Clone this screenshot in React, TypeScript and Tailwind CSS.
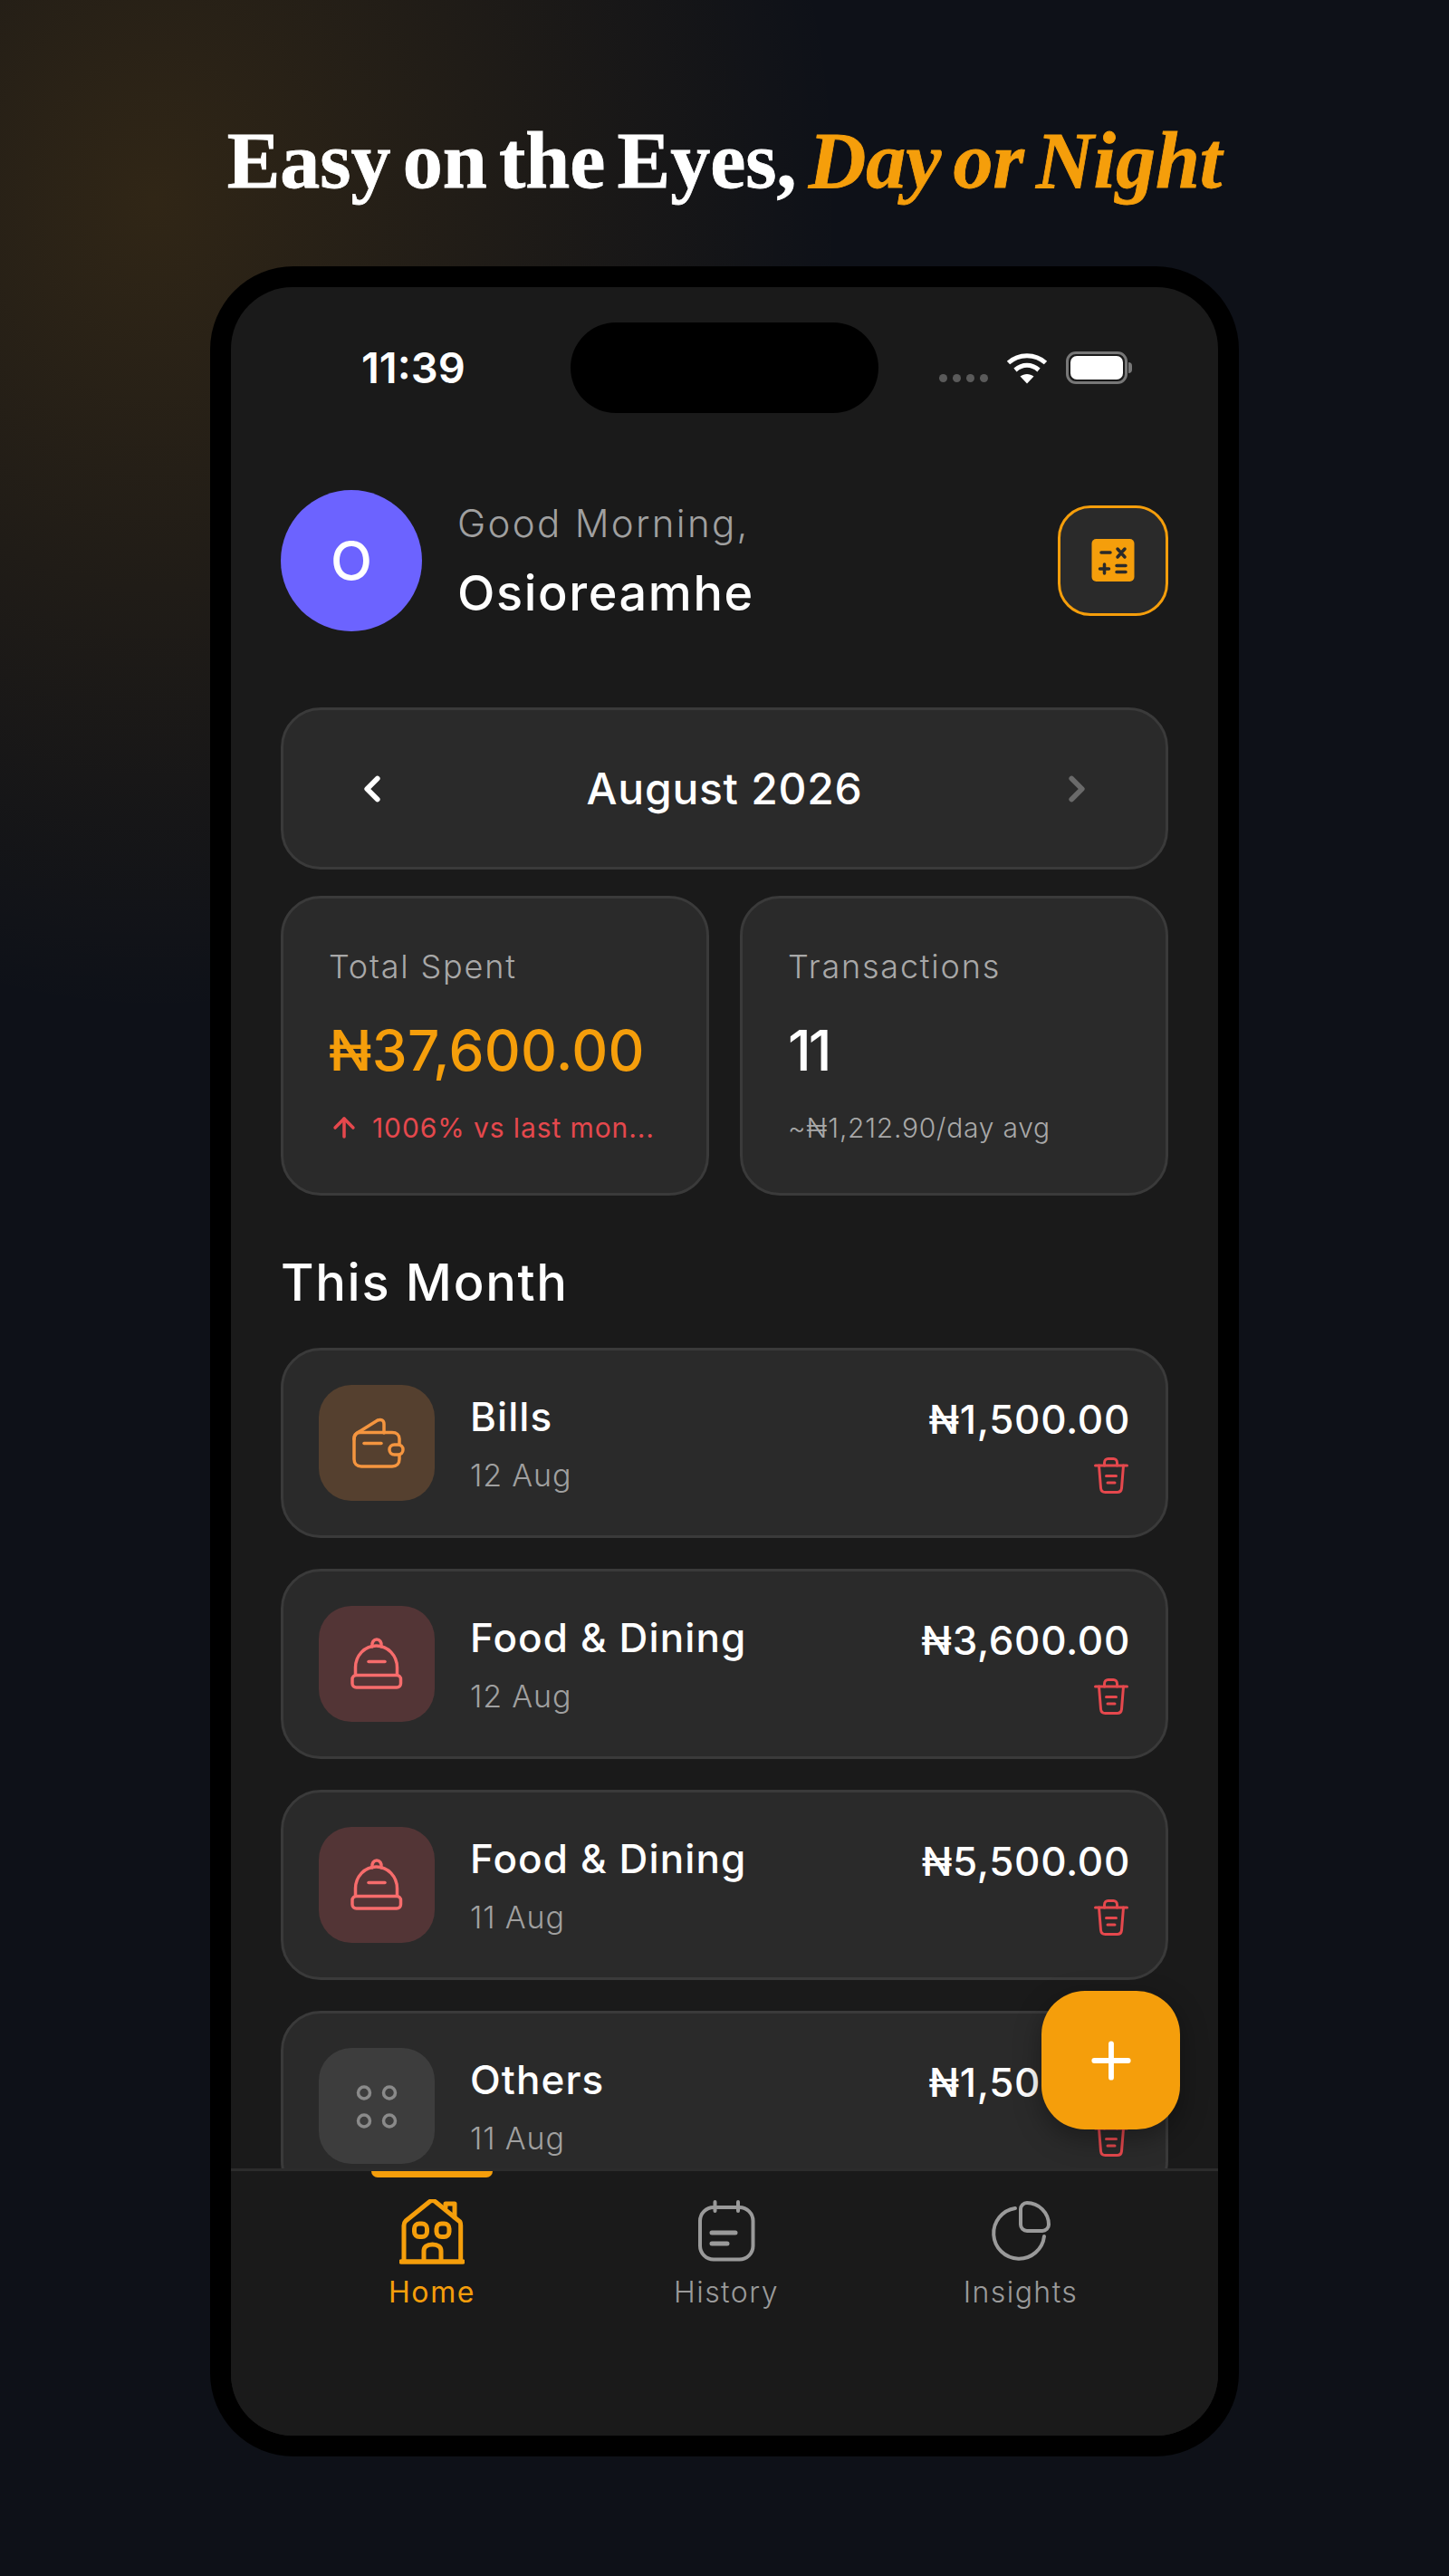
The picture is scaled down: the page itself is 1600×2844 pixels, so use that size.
import { ArrowUp, ChevronLeft, ChevronRight, Plus } from "lucide-react";

const rows = [
  { name: "Bills", date: "12 Aug", amount: "₦1,500.00", kind: "bills" },
  { name: "Food & Dining", date: "12 Aug", amount: "₦3,600.00", kind: "food" },
  { name: "Food & Dining", date: "11 Aug", amount: "₦5,500.00", kind: "food" },
  { name: "Others", date: "11 Aug", amount: "₦1,500.00", kind: "others" },
];

function WalletIcon() {
  return (
    <svg width="64" height="64" viewBox="0 0 64 64" fill="none" stroke="#f5953f" strokeWidth="3.500" strokeLinecap="round" strokeLinejoin="round">
      <path d="M7 28c0-4 2-7 6-8.500L33 7c4-1.500 7 0 7 4v10" />
      <path d="M7 27c0-4 3-6.500 7-6.500h35c5 0 8 3 8 7V50c0 5-3 8-8 8H15c-5 0-8-3-8-8Z" />
      <path d="M18 32.500h19" />
      <rect x="46" y="34" width="15" height="11" rx="5.500" fill="#55402f" />
    </svg>
  );
}

function FoodIcon() {
  return (
    <svg width="64" height="64" viewBox="0 0 64 64" fill="none" stroke="#f76c6c" strokeWidth="3.500" strokeLinecap="round" strokeLinejoin="round">
      <path d="M8.500 44V36c0-13 10-24 23-24s23 11 23 24v8" />
      <path d="M27 13c-1-5 2-8 5-8s6 3 5 8" />
      <rect x="5" y="44.500" width="53.500" height="13.500" rx="4.500" />
      <path d="M23 29.500h18" />
    </svg>
  );
}

function OthersIcon() {
  return (
    <svg width="64" height="64" viewBox="0 0 64 64" fill="none" stroke="#8a8a8a" strokeWidth="3.500">
      <circle cx="18" cy="17.500" r="6.500" />
      <circle cx="46" cy="17.500" r="6.500" />
      <circle cx="18" cy="48.500" r="6.500" />
      <circle cx="46" cy="48.500" r="6.500" />
    </svg>
  );
}

function TrashIcon() {
  return (
    <svg width="40" height="40" viewBox="0 0 40 40" fill="none" stroke="#e5484d" strokeWidth="3" strokeLinecap="round" strokeLinejoin="round">
      <path d="M2.500 9h35" />
      <path d="M12.500 9V6c0-3 2-4.500 4-4.500h6c2 0 4 1.500 4 4.500v3" />
      <path d="M6.500 9 8.500 34c.3 3 2 4.500 5 4.500h13c3 0 4.700-1.500 5-4.500l2-25" />
      <path d="M14.500 20.500h11M16 28h8" />
    </svg>
  );
}

function CalcIcon() {
  return (
    <svg width="48" height="48" viewBox="0 0 48 48">
      <rect x="0.500" width="47" height="47" rx="5" fill="#f59e0b" />
      <g stroke="#2a2a2a" strokeWidth="3.500" strokeLinecap="round">
        <path d="M11 15h10M29 11l8 9M37 11l-8 9M14.500 28v10M9.500 33h10M28 29.500h10M28 36.500h10" />
      </g>
    </svg>
  );
}

function HomeIcon() {
  return (
    <svg width="72" height="72" viewBox="0 0 72 72" fill="none" stroke="#f59e0b" strokeWidth="5" strokeLinecap="round" strokeLinejoin="round">
      <path d="M5 68V29c0-2 .5-3.500 2-5L33 3c2-1.800 5-1.800 7 0l27 22c.5 1 .7 2.500.7 4v39" />
      <path d="M51 9V5h10v15" />
      <rect x="16.500" y="27" width="14" height="14.500" rx="5.500" />
      <rect x="41" y="27" width="14" height="14.500" rx="5.500" />
      <path d="M27 68V57c0-4 3-7 9.500-7S46 53 46 57v11" />
      <path d="M2 69h68" strokeWidth="5.500" />
    </svg>
  );
}

function HistoryIcon() {
  return (
    <svg width="72" height="72" viewBox="0 0 72 72" fill="none" stroke="#9a9a9a" strokeWidth="4" strokeLinecap="round" strokeLinejoin="round">
      <rect x="7" y="9" width="58.500" height="57.500" rx="15" />
      <path d="M23.500 3v10M49 3v10" />
      <path d="M20 37h26M20 49h17" strokeWidth="5" />
    </svg>
  );
}

function InsightsIcon() {
  return (
    <svg width="72" height="72" viewBox="0 0 72 72" fill="none" stroke="#9a9a9a" strokeWidth="4" strokeLinecap="round" strokeLinejoin="round">
      <path d="M30 10A28 28 0 1 0 62 41" />
      <path d="M36 11a7 7 0 0 1 7-7c13 0 24 11 24 24a7 7 0 0 1-7 7H43a7 7 0 0 1-7-7Z" />
    </svg>
  );
}

function WifiIcon() {
  return (
    <svg width="46" height="36" viewBox="0 0 46 36" fill="none" stroke="#ffffff" strokeWidth="5">
      <path d="M2.500 12.500C14 2 32 2 43.500 12.500" />
      <path d="M10 20.500c8-7 18-7 26 0" />
      <path d="M23 35.500 15.500 27.500c4.500-3.500 10.500-3.500 15 0Z" fill="#ffffff" stroke="none" />
    </svg>
  );
}

function RowIcon({ kind }: { kind: string }) {
  if (kind === "bills") {
    return (
      <div className="flex h-[128px] w-[128px] shrink-0 items-center justify-center rounded-[36px] bg-[#55402f]">
        <WalletIcon />
      </div>
    );
  }
  if (kind === "food") {
    return (
      <div className="flex h-[128px] w-[128px] shrink-0 items-center justify-center rounded-[36px] bg-[#533536]">
        <FoodIcon />
      </div>
    );
  }
  return (
    <div className="flex h-[128px] w-[128px] shrink-0 items-center justify-center rounded-[36px] bg-[#3d3d3d]">
      <OthersIcon />
    </div>
  );
}

function TabItem({ label, active, icon }: { label: string; active?: boolean; icon: React.ReactNode }) {
  return (
    <div className="flex w-[325px] flex-col items-center">
      <div className={active ? "h-[7px] w-[134px] rounded-b-[8px] bg-[#f59e0b]" : "h-[7px] w-[134px]"} />
      <div className="mt-[24px] h-[72px]">{icon}</div>
      <span className={active ? "mt-[9px] text-[32px] leading-[44px] tracking-[0.05em] text-[#f59e0b]" : "mt-[9px] text-[32px] leading-[44px] font-light tracking-[0.045em] text-[#9a9a9a]"}>
        {label}
      </span>
    </div>
  );
}

export default function App() {
  return (
    <div className="flex h-[2844px] w-[1600px] flex-col items-center overflow-hidden bg-[#0e1118] bg-[radial-gradient(ellipse_760px_900px_at_170px_220px,rgba(245,158,11,0.15),transparent)] font-[Inter,sans-serif] text-white">
      <h1 className="mt-[131px] h-[94px] text-[88px] leading-[94px] font-bold [word-spacing:-0.1em] whitespace-nowrap [-webkit-text-stroke:0.8px_currentColor] font-['Liberation_Serif',serif]">
        Easy on the Eyes, <em className="text-[#f59e0b]">Day or Night</em>
      </h1>

      {/* phone */}
      <div className="mt-[69px] h-[2418px] w-[1136px] rounded-[92px] bg-black p-[23px]">
        <div className="relative flex h-[2372px] flex-col overflow-hidden rounded-[68px] bg-[#1a1a1a]">
          <div className="flex-1 overflow-hidden">
            {/* status bar */}
            <div className="mt-[39px] flex h-[100px] items-center">
              <div className="w-[375px] pb-[1px] pl-[144px] text-[47px] leading-none font-semibold">11:39</div>
              <div className="h-[100px] w-[340px] rounded-[50px] bg-black" />
              <div className="flex w-[375px] items-center justify-end gap-[20px] pr-[95px]">
                <div className="mt-[22px] flex gap-[6px]">
                  <span className="h-[9px] w-[9px] rounded-full bg-[#5a5a5a]" />
                  <span className="h-[9px] w-[9px] rounded-full bg-[#5a5a5a]" />
                  <span className="h-[9px] w-[9px] rounded-full bg-[#5a5a5a]" />
                  <span className="h-[9px] w-[9px] rounded-full bg-[#5a5a5a]" />
                </div>
                <WifiIcon />
                <div className="flex items-center gap-[1px]">
                  <div className="h-[36px] w-[68px] rounded-[11px] border-[3px] border-[#777777] p-[2px]">
                    <div className="h-full w-full rounded-[7px] bg-white" />
                  </div>
                  <div className="h-[12px] w-[4px] rounded-r-full bg-[#777777]" />
                </div>
              </div>
            </div>

            <div className="px-[55px]">
              {/* header */}
              <div className="mt-[85px] flex h-[156px] items-center">
                <div className="flex h-[156px] w-[156px] items-center justify-center rounded-full bg-[#6c63ff] text-[60px] leading-none font-medium">O</div>
                <div className="ml-[39px] flex-1">
                  <p className="text-[42px] leading-[56px] font-light tracking-[0.055em] text-[#a0a0a0]">Good Morning,</p>
                  <p className="mt-[15px] text-[54px] leading-[68px] font-medium tracking-[0.03em]">Osioreamhe</p>
                </div>
                <div className="flex h-[122px] w-[122px] items-center justify-center rounded-[36px] border-[3px] border-[#f59e0b] bg-[#2a2a2a]">
                  <CalcIcon />
                </div>
              </div>

              {/* month switch */}
              <div className="mt-[84px] flex h-[179px] items-center justify-between rounded-[44px] border-[3px] border-[#3a3a3a] bg-[#2a2a2a] px-[75px]">
                <ChevronLeft size={46} strokeWidth={3} className="text-white" />
                <span className="text-[48px] font-medium tracking-[0.015em]">August 2026</span>
                <ChevronRight size={46} strokeWidth={3} className="text-[#6a6a6a]" />
              </div>

              {/* stats */}
              <div className="mt-[29px] grid grid-cols-2 gap-[34px]">
                <div className="h-[331px] rounded-[44px] border-[3px] border-[#3a3a3a] bg-[#2a2a2a] pt-[52px] pl-[50px]">
                  <p className="text-[36px] leading-[46px] font-light tracking-[0.05em] text-[#a8a8a8]">Total Spent</p>
                  <p className="mt-[33px] text-[62px] leading-[74px] font-medium tracking-[0.005em] whitespace-nowrap text-[#f59e0b]">₦37,600.00</p>
                  <div className="mt-[28px] flex items-center gap-[14px] text-[#e5484d]">
                    <ArrowUp size={34} strokeWidth={2.500} className="shrink-0" />
                    <span className="text-[30px] leading-[40px] tracking-[0.03em] whitespace-nowrap">1006% vs last mon...</span>
                  </div>
                </div>
                <div className="h-[331px] rounded-[44px] border-[3px] border-[#3a3a3a] bg-[#2a2a2a] pt-[52px] pl-[50px]">
                  <p className="text-[36px] leading-[46px] font-light tracking-[0.05em] text-[#a8a8a8]">Transactions</p>
                  <p className="mt-[33px] text-[62px] leading-[74px] font-medium tracking-[-0.05em]">11</p>
                  <p className="mt-[28px] text-[30px] leading-[40px] font-light tracking-[0.025em] whitespace-nowrap text-[#a8a8a8]">~₦1,212.90/day avg</p>
                </div>
              </div>

              {/* list */}
              <h2 className="mt-[64px] text-[56px] leading-[64px] font-medium tracking-[0.03em]">This Month</h2>
              <div className="mt-[40px] flex flex-col gap-[34px]">
                {rows.map((row, i) => (
                  <div key={i} className="flex h-[210px] shrink-0 items-center rounded-[44px] border-[3px] border-[#3a3a3a] bg-[#2a2a2a] pr-[40px] pl-[39px]">
                    <RowIcon kind={row.kind} />
                    <div className="ml-[39px] flex-1">
                      <p className="mb-[5px] text-[44px] leading-[56px] font-medium tracking-[0.025em]">{row.name}</p>
                      <p className="mt-[15px] text-[34px] leading-[44px] font-light tracking-[0.025em] text-[#a0a0a0]">{row.date}</p>
                    </div>
                    <div className="flex flex-col items-end">
                      <p className="mt-[2px] mr-[-1px] text-[44px] leading-[56px] font-medium tracking-[0.015em]">{row.amount}</p>
                      <div className="mt-[14px]"><TrashIcon /></div>
                    </div>
                  </div>
                ))}
              </div>
            </div>
          </div>

          {/* tab bar */}
          <div className="flex h-[295px] shrink-0 justify-center border-t-[3px] border-[#2c2c2c] bg-[#1a1a1a] pl-[4px]">
            <TabItem label="Home" active icon={<HomeIcon />} />
            <TabItem label="History" icon={<HistoryIcon />} />
            <TabItem label="Insights" icon={<InsightsIcon />} />
          </div>

          {/* add button */}
          <div className="absolute right-[42px] bottom-[338px] flex h-[153px] w-[153px] items-center justify-center rounded-[48px] bg-[#f59e0b] shadow-[0_10px_30px_rgba(0,0,0,0.35)]">
            <Plus size={64} strokeWidth={2.200} className="text-white" />
          </div>
        </div>
      </div>
    </div>
  );
}
